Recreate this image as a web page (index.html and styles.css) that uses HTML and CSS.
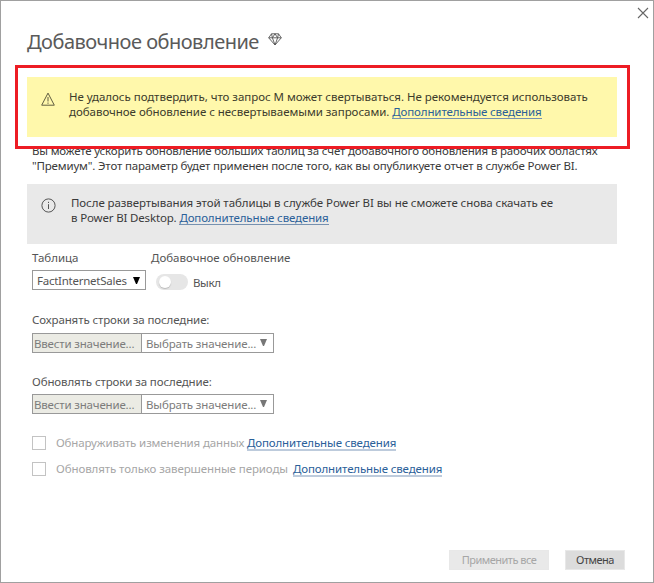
FILE: index.html
```html
<!DOCTYPE html>
<html lang="ru">
<head>
<meta charset="utf-8">
<title>Добавочное обновление</title>
<link rel="stylesheet" href="styles.css">
</head>
<body>
<main class="dialog">
  <button class="close" aria-label="Закрыть"><svg width="12" height="12" viewBox="0 0 12 12"><path d="M1 1L11 11M11 1L1 11"/></svg></button>
  <header class="header">
    <h1 class="title">Добавочное обновление</h1>
    <svg class="gem" width="14" height="13" viewBox="0 0 14 13"><path d="M3.5 .8H10.5L13.3 4.8L7 12L.7 4.8ZM.7 4.8H13.3M7 .8L4.4 4.8L7 12L9.6 4.8L7 .8M3.5 .8L4.4 4.8M10.5 .8L9.6 4.8"/></svg>
  </header>

  <section class="notice warning">
    <svg class="notice-icon" width="14" height="14" viewBox="0 0 14 14"><path d="M7 1.1L13.3 13.2H.7ZM7 5V9.5M7 10.5V11.8"/></svg>
    <div>
      <div class="line warn-first">Не удалось подтвердить, что запрос M может свертываться. Не рекомендуется использовать</div>
      <div class="line"><span class="warn-second">добавочное обновление с несвертываемыми запросами. </span><a class="link" href="#">Дополнительные сведения</a></div>
    </div>
  </section>
  <div class="highlight"></div>

  <div class="intro">
    <div class="line">Вы можете ускорить обновление больших таблиц за счет добавочного обновления в рабочих областях</div>
    <div class="line">"Премиум". Этот параметр будет применен после того, как вы опубликуете отчет в службе Power BI.</div>
  </div>

  <section class="notice info">
    <svg class="notice-icon" width="15" height="15" viewBox="0 0 15 15"><circle cx="7.5" cy="7.5" r="6.6"/><path d="M7.5 6.2V11M7.5 3.8V5"/></svg>
    <div>
      <div class="line info-first">После развертывания этой таблицы в службе Power BI вы не сможете снова скачать ее</div>
      <div class="line"><span class="info-second">в Power BI Desktop. </span><a class="link" href="#">Дополнительные сведения</a></div>
    </div>
  </section>

  <div class="form">
    <div class="row">
      <div class="field table-field">
        <div class="label">Таблица</div>
        <div class="select table-select"><span>FactInternetSales</span><svg width="7" height="7" viewBox="0 0 7 7"><path d="M0 0H7L4 7H3Z"/></svg></div>
      </div>
      <div class="field">
        <div class="label">Добавочное обновление</div>
        <div class="toggle-row"><span class="toggle"><span class="knob"></span></span><span class="toggle-text">Выкл</span></div>
      </div>
    </div>

    <div class="period store">
      <div class="label">Сохранять строки за последние:</div>
      <div class="inputs">
        <div class="input">Ввести значение...</div>
        <div class="select unit"><span>Выбрать значение...</span><svg width="7" height="7" viewBox="0 0 7 7"><path d="M0 0H7L4 7H3Z"/></svg></div>
      </div>
    </div>
    <div class="period refresh">
      <div class="label">Обновлять строки за последние:</div>
      <div class="inputs">
        <div class="input">Ввести значение...</div>
        <div class="select unit"><span>Выбрать значение...</span><svg width="7" height="7" viewBox="0 0 7 7"><path d="M0 0H7L4 7H3Z"/></svg></div>
      </div>
    </div>

    <div class="checks">
      <div class="check"><span class="box"></span><span class="check-text">Обнаруживать изменения данных</span><a class="link soft" href="#">Дополнительные сведения</a></div>
      <div class="check wide"><span class="box"></span><span class="check-text">Обновлять только завершенные периоды</span><a class="link soft" href="#">Дополнительные сведения</a></div>
    </div>
  </div>

  <footer class="footer">
    <button class="btn apply" disabled>Применить все</button>
    <button class="btn cancel">Отмена</button>
  </footer>
</main>
</body>
</html>
```
FILE: styles.css
```css
* { box-sizing: border-box; }
body {
  margin: 0;
  font: 11.5px/15px "Noto Sans", sans-serif;
  color: #3a3a3a;
  background: #fff;
}
svg { display: block; flex: none; fill: none; }
.dialog {
  position: relative;
  display: flex;
  flex-direction: column;
  width: 654px;
  height: 583px;
  border: 1px solid #a0a0a0;
  white-space: nowrap;
  overflow: hidden;
}
.close {
  position: absolute;
  top: 6px;
  right: 4px;
  padding: 0;
  border: 0;
  background: none;
}
.close svg { stroke: #666; stroke-width: 1.1; }
.header {
  display: flex;
  height: 76px;
  padding: 27px 0 0 26px;
}
.title {
  width: 234px;
  margin: 0;
  font-size: 20px;
  line-height: 28px;
  font-weight: 400;
  letter-spacing: -.5px;
  color: #5a5a5a;
}
.gem { margin: 5px 0 0 7px; stroke: #555; stroke-width: .9; }
.notice {
  display: flex;
  width: 590px;
  height: 60px;
  margin-left: 26px;
}
.notice-icon { stroke: #555; stroke-width: 1; }
.warning { padding: 12px 0 0 14px; gap: 14px; background: #fff8ab; color: #3c3b2c; }
.warning .notice-icon { margin-top: 3px; stroke: #605d40; }
.info { padding: 11px 0 0 14px; gap: 15px; background: #e9e9e9; }
.info .notice-icon { margin-top: 3px; }
.line { height: 15px; }
.warn-first { letter-spacing: -.03px; }
.warn-second { letter-spacing: -.035px; }
.info-first { letter-spacing: -.075px; }
.info-second { letter-spacing: -.16px; }
.highlight {
  position: absolute;
  left: 14px;
  top: 64px;
  width: 615px;
  height: 84px;
  border: 3px solid #ed1c24;
}
.intro { height: 47px; padding: 6px 0 0 31px; letter-spacing: -.165px; }
.link {
  display: inline-block;
  height: 15px;
  border-bottom: 1px solid #7691b0;
  color: #2a6099;
  letter-spacing: -.13px;
  text-decoration: none;
}
.form { padding: 6px 0 0 31px; color: #555; }
.row { display: flex; }
.table-field { width: 119px; }
.label { height: 15px; }
.select {
  display: flex;
  align-items: center;
  justify-content: space-between;
  height: 20px;
  border: 1px solid #999;
  background: #fff;
}
.select svg { fill: #777; }
.table-select { width: 114px; margin-top: 5px; padding: 1px 5px 0 4px; letter-spacing: -.25px; }
.table-select svg { fill: #000; margin-top: -1px; }
.toggle-row { display: flex; gap: 5px; padding: 9px 0 0 5px; }
.toggle {
  width: 32px;
  height: 16px;
  padding: 2px 3px;
  border-radius: 8px;
  background: #e6e6e6;
}
.knob {
  display: block;
  width: 12px;
  height: 12px;
  border-radius: 50%;
  background: #fff;
  box-shadow: 0 1px 1px #bbb;
}
.toggle-text { padding-top: 1px; letter-spacing: -.35px; }
.period .label { letter-spacing: -.11px; height: 21px; }
.store { margin-top: 22px; height: 62px; }
.refresh { height: 62px; }
.refresh .label { height: 20px; }
.inputs { display: flex; color: #7c7c7c; }
.input {
  width: 110px;
  height: 20px;
  padding: 2px 0 0 1px;
  border: 1px solid #999;
  background: #ebebe4;
  letter-spacing: -.17px;
}
.unit { width: 133px; margin-left: -1px; padding: 0 6px 0 4px; letter-spacing: -.14px; }
.unit svg { margin-top: -1px; }
.check { display: flex; height: 26px; color: #a6a6a6; }
.box { width: 14px; height: 14px; margin-right: 10px; border: 1px solid #c3c3c3; }
.check-text { width: 191px; margin-top: -1px; letter-spacing: -.13px; }
.wide .check-text { width: 237px; letter-spacing: -.09px; }
.soft { height: 16px; margin-top: -1px; border-bottom: 2px solid #bdcbdc; }
.footer {
  display: flex;
  justify-content: flex-end;
  gap: 16px;
  margin-top: auto;
  padding: 0 28px 12px 0;
}
.btn {
  height: 20px;
  padding: 0;
  border: 1px solid #e8e8e8;
  background: #e9e9e9;
  font: 11px/16px "Noto Sans", sans-serif;
}
.apply { width: 100px; color: #a6a6a6; letter-spacing: -.5px; }
.cancel { width: 60px; background: #dcdcdc; color: #444; letter-spacing: -.5px; }
```
